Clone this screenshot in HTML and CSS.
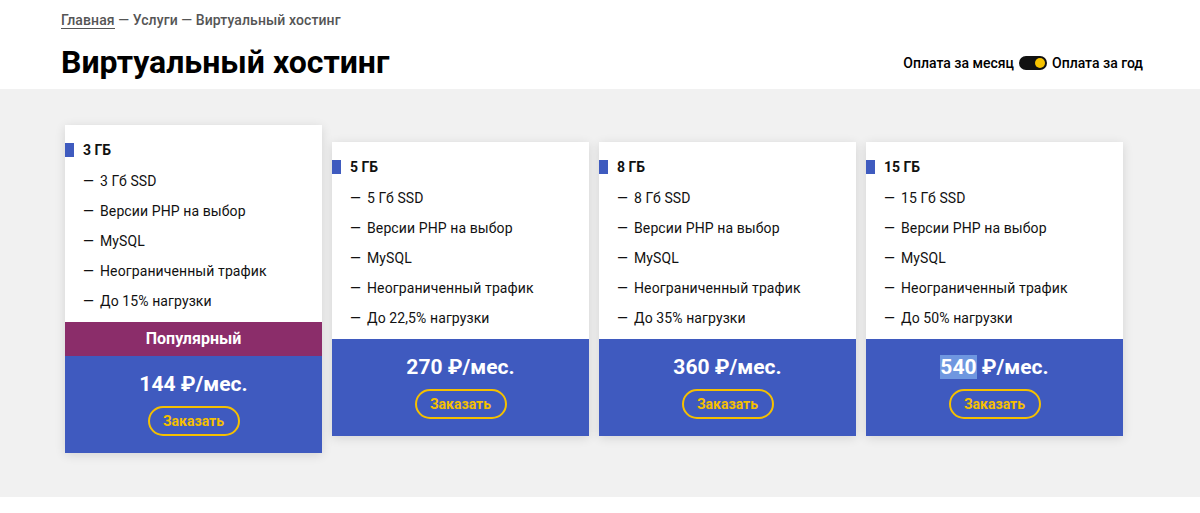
FILE: index.html
```html
<!DOCTYPE html>
<html lang="ru">
<head>
  <meta charset="UTF-8" />
  <meta name="viewport" content="width=device-width, initial-scale=1.0"/>
  <title>Виртуальный хостинг</title>
  <link rel="stylesheet" href="styles.css">
</head>
<body>
  <div class="head">
    <div class="crumbs">
      <a href="#">Главная</a> — Услуги — Виртуальный хостинг
    </div>
    <div class="title-row">
      <h1>Виртуальный хостинг</h1>
      <div class="period">
        <span>Оплата за месяц</span>
        <span class="switch"><span class="knob"></span></span>
        <span>Оплата за год</span>
      </div>
    </div>
  </div>

  <div class="plans">
    <div class="card popular">
      <div class="info">
        <div class="name">3 ГБ</div>
        <ul>
          <li>3 Гб SSD</li>
          <li>Версии PHP на выбор</li>
          <li>MySQL</li>
          <li>Неограниченный трафик</li>
          <li>До 15% нагрузки</li>
        </ul>
      </div>
      <div class="badge">Популярный</div>
      <div class="price">
        <div class="sum">144 ₽/мес.</div>
        <button>Заказать</button>
      </div>
    </div>

    <div class="card">
      <div class="info">
        <div class="name">5 ГБ</div>
        <ul>
          <li>5 Гб SSD</li>
          <li>Версии PHP на выбор</li>
          <li>MySQL</li>
          <li>Неограниченный трафик</li>
          <li>До 22,5% нагрузки</li>
        </ul>
      </div>
      <div class="price">
        <div class="sum">270 ₽/мес.</div>
        <button>Заказать</button>
      </div>
    </div>

    <div class="card">
      <div class="info">
        <div class="name">8 ГБ</div>
        <ul>
          <li>8 Гб SSD</li>
          <li>Версии PHP на выбор</li>
          <li>MySQL</li>
          <li>Неограниченный трафик</li>
          <li>До 35% нагрузки</li>
        </ul>
      </div>
      <div class="price">
        <div class="sum">360 ₽/мес.</div>
        <button>Заказать</button>
      </div>
    </div>

    <div class="card">
      <div class="info">
        <div class="name">15 ГБ</div>
        <ul>
          <li>15 Гб SSD</li>
          <li>Версии PHP на выбор</li>
          <li>MySQL</li>
          <li>Неограниченный трафик</li>
          <li>До 50% нагрузки</li>
        </ul>
      </div>
      <div class="price">
        <div class="sum"><span class="sel">540</span> ₽/мес.</div>
        <button>Заказать</button>
      </div>
    </div>
  </div>
</body>
</html>
```

FILE: styles.css
```css
body { margin: 0; font-family: Roboto, "Noto Sans", sans-serif; color: #111; background: #fff; }

.head { padding: 10px 57px 0 61px; height: 89px; box-sizing: border-box; }
.crumbs { font-size: 14px; font-weight: 500; color: #555; line-height: 20px; letter-spacing: 0.1px; }
.crumbs a { color: #555; text-decoration: none; border-bottom: 1px solid #555; }
.title-row { display: flex; align-items: center; justify-content: space-between; margin-top: 12px; }
h1 { margin: 0; font-size: 32px; font-weight: 700; line-height: 40px; color: #000; }
.period { display: flex; align-items: center; gap: 5px; font-size: 14px; font-weight: 500; color: #000; margin-top: 2px; }
.switch { display: inline-block; width: 28px; height: 14px; background: #111; border-radius: 7px; position: relative; }
.knob { position: absolute; right: 2px; top: 2px; width: 10px; height: 10px; border-radius: 50%; background: #f7c300; }

.plans {
  background: #f1f1f1; height: 408px; box-sizing: border-box;
  padding: 36px 0 44px 65px;
  display: flex; align-items: center; gap: 10px;
}
.card { width: 257px; background: #fff; box-shadow: 0 2px 10px rgba(0,0,0,0.12); }
.info { height: 197px; padding-top: 18px; box-sizing: border-box; }
.name { font-size: 14px; font-weight: 700; line-height: 14px; padding-left: 18px; position: relative; }
.name::before { content: ""; position: absolute; left: 0; top: 0; width: 9px; height: 14px; background: #3f5bbf; }
ul { list-style: none; margin: 9px 0 0; padding: 0 0 0 18px; }
li { font-size: 14px; line-height: 30px; height: 30px; letter-spacing: 0.1px; }
li::before { content: "—"; margin-right: 6px; }

.badge { background: #8b2d6a; color: #fff; font-size: 16px; font-weight: 700; text-align: center; height: 34px; line-height: 34px; }
.price { background: #3f5abf; height: 97px; text-align: center; padding-top: 16px; box-sizing: border-box; }
.sum { color: #fff; font-size: 21px; font-weight: 700; line-height: 24px; }
.sel { background: #6f97e0; }
button {
  display: block; margin: 10px auto 0; width: 92px; height: 30px; border: 2px solid #f5c000; border-radius: 15px;
  background: transparent; color: #f5c000; font-family: inherit; font-size: 14px; font-weight: 700; padding: 0;
}
```
